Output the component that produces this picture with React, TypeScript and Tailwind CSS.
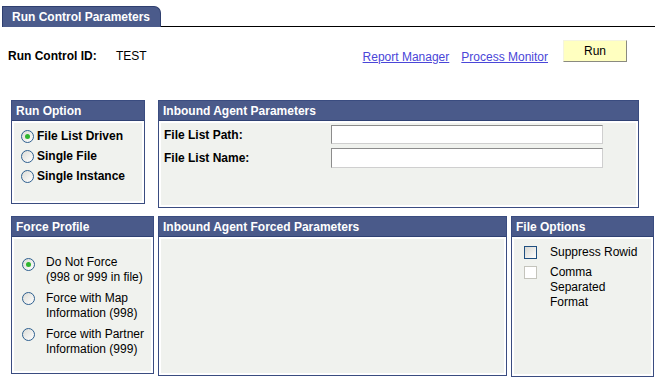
import React from "react";

const Radio = ({ checked }: { checked?: boolean }) => (
  <span className="relative inline-flex h-[13px] w-[13px] shrink-0 items-center justify-center rounded-full border border-[#2d5f8f] bg-gradient-to-br from-[#dcdcd6] to-white">
    {checked && <span className="h-[5px] w-[5px] rounded-full bg-[#2fb52f]" />}
  </span>
);

const Box = ({
  title,
  className,
  children,
}: {
  title: string;
  className: string;
  children?: React.ReactNode;
}) => (
  <div className={`flex flex-col border border-[#3a4c80] bg-white ${className}`}>
    <div className="flex h-[20px] shrink-0 items-center border-b border-[#2f4173] bg-[#4a5a8a] pl-[4px] text-[12px] font-bold text-white">
      {title}
    </div>
    <div className="m-[2px] mt-[2px] flex-1 bg-[#f0f2ee]">{children}</div>
  </div>
);

export default function App() {
  return (
    <div
      className="relative h-[391px] w-[671px] overflow-hidden bg-white text-[12px] text-black"
      style={{ fontFamily: '"Liberation Sans", Arial, sans-serif' }}
    >
      {/* Tab row */}
      <div className="flex items-end pl-[2px] pt-[6px] pr-[16px]">
        <div className="flex h-[21px] w-[159px] items-center rounded-tr-[7px] border border-b-0 border-[#2f3f6f] bg-[#4b5b8b] pl-[9px] text-[12px] font-bold text-white">
          Run Control Parameters
        </div>
        <div className="flex-1 border-b border-black" />
      </div>

      {/* Run control row */}
      <div className="mt-[13px] flex h-[22px] items-center pl-[8px] pr-[44px]">
        <span className="w-[108px] pt-[10px] font-bold">Run Control ID:</span>
        <span className="pt-[10px]">TEST</span>
        <div className="flex-1" />
        <a className="pt-[12px] text-[#4a46d8] underline" href="#">
          Report Manager
        </a>
        <a className="ml-[12px] pt-[12px] text-[#4a46d8] underline" href="#">
          Process Monitor
        </a>
        <button className="ml-[15px] h-[22px] w-[64px] border border-t-[#f4f4e0] border-l-[#f4f4e0] border-r-[#8a8a80] border-b-[#8a8a80] bg-[#ffffc0] text-[12px]">
          Run
        </button>
      </div>

      {/* First row of boxes */}
      <div className="ml-[11px] mt-[38px] flex items-start gap-[13px]">
        <Box title="Run Option" className="h-[104px] w-[134px]">
          <div className="flex flex-col gap-[2px] pl-[7px] pt-[4px] font-bold">
            <label className="flex items-center gap-[3px]">
              <Radio checked />
              File List Driven
            </label>
            <label className="flex items-center gap-[3px]">
              <Radio />
              Single File
            </label>
            <label className="flex items-center gap-[3px]">
              <Radio />
              Single Instance
            </label>
          </div>
        </Box>
        <Box title="Inbound Agent Parameters" className="h-[108px] w-[481px]">
          <div className="flex flex-col gap-[4px] pl-[3px] pt-[2px] font-bold">
            <div className="flex items-center">
              <span className="w-[167px]">File List Path:</span>
              <input className="h-[19px] w-[272px] border border-t-[#8c8c8c] border-l-[#8c8c8c] border-r-[#cfcfcf] border-b-[#cfcfcf] bg-white" />
            </div>
            <div className="flex items-center">
              <span className="w-[167px]">File List Name:</span>
              <input className="h-[20px] w-[272px] border border-t-[#8c8c8c] border-l-[#8c8c8c] border-r-[#cfcfcf] border-b-[#cfcfcf] bg-white" />
            </div>
          </div>
        </Box>
      </div>

      {/* Second row of boxes */}
      <div className="ml-[11px] mt-[8px] flex items-start gap-[4px]">
        <Box title="Force Profile" className="h-[158px] w-[143px]">
          <div className="flex flex-col gap-[6px] pl-[8px] pt-[16px] leading-[15px]">
            <label className="flex items-start gap-[11px]">
              <span className="pt-[1px]">
                <Radio checked />
              </span>
              <span>
                Do Not Force
                <br />
                (998 or 999 in file)
              </span>
            </label>
            <label className="flex items-start gap-[11px]">
              <span className="pt-[1px]">
                <Radio />
              </span>
              <span>
                Force with Map
                <br />
                Information (998)
              </span>
            </label>
            <label className="flex items-start gap-[11px]">
              <span className="pt-[1px]">
                <Radio />
              </span>
              <span>
                Force with Partner
                <br />
                Information (999)
              </span>
            </label>
          </div>
        </Box>
        <Box title="Inbound Agent Forced Parameters" className="h-[160px] w-[349px]" />
        <Box title="File Options" className="h-[161px] w-[143px]">
          <div className="flex flex-col gap-[5px] pl-[10px] pt-[6px] leading-[15px]">
            <label className="flex items-start gap-[13px]">
              <span className="mt-[1px] h-[13px] w-[13px] shrink-0 border border-[#1f4f80] bg-gradient-to-br from-[#d8d8d2] to-white" />
              <span>Suppress Rowid</span>
            </label>
            <label className="flex items-start gap-[13px]">
              <span className="mt-[1px] h-[13px] w-[13px] shrink-0 border border-[#c4c4bc] bg-white" />
              <span>
                Comma
                <br />
                Separated
                <br />
                Format
              </span>
            </label>
          </div>
        </Box>
      </div>
    </div>
  );
}
